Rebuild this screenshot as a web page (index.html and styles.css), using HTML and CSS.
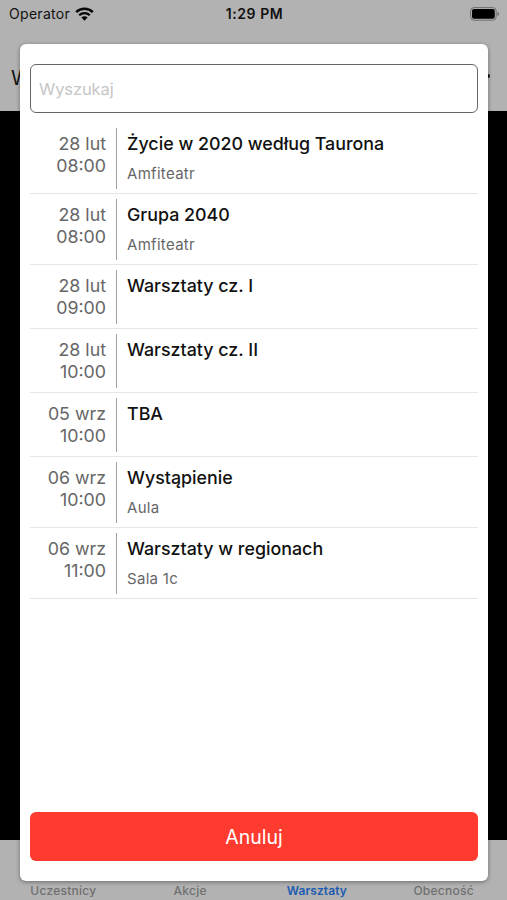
FILE: index.html
```
<!DOCTYPE html>
<html lang="pl">
  <head>
    <meta charset="UTF-8">
    <meta name="viewport" content="width=device-width, initial-scale=1">
    <title>Warsztaty</title>
    <link rel="stylesheet" href="styles.css">
  </head>
  <body>
    <div class="screen">
      <header class="top">
        <div class="status-bar">
          <div class="carrier">
            <span>Operator</span>
            <svg class="wifi" width="19" height="14" viewBox="0 0 19 14">
              <path d="M1.2 5.1a12 12 0 0 1 16.6 0" fill="none" stroke="#080808" stroke-width="2.5"/>
              <path d="M4.2 8.3a7.6 7.6 0 0 1 10.6 0" fill="none" stroke="#080808" stroke-width="2.3"/>
              <path d="M9.5 13.7 6.4 10.5a4.4 4.4 0 0 1 6.2 0z" fill="#080808"/>
            </svg>
          </div>
          <div class="clock">1:29 PM</div>
          <svg class="battery" width="30" height="14" viewBox="0 0 30 14">
            <rect x=".6" y=".6" width="25.6" height="12.6" rx="3.4" fill="none" stroke="#6f6f6f"/>
            <rect x="2" y="2" width="22.8" height="9.8" rx="2" fill="#000"/>
            <path d="M27.5 4.8v4.4c1-.4 1.6-1.2 1.6-2.2s-.6-1.8-1.6-2.2z" fill="#6f6f6f"/>
          </svg>
        </div>
        <div class="nav-bar">
          <span>Warsztaty</span>
          <span class="dot"></span>
        </div>
      </header>
      <nav class="tab-bar">
        <span class="tab">Uczestnicy</span>
        <span class="tab">Akcje</span>
        <span class="tab active">Warsztaty</span>
        <span class="tab">Obecność</span>
      </nav>

      <div class="modal">
        <input class="search" type="text" placeholder="Wyszukaj">
        <ul class="list">
          <li class="item">
            <div class="when">28 lut<br>08:00</div>
            <div class="what"><div class="title">Życie w 2020 według Taurona</div><div class="place">Amfiteatr</div></div>
          </li>
          <li class="item">
            <div class="when">28 lut<br>08:00</div>
            <div class="what"><div class="title">Grupa 2040</div><div class="place">Amfiteatr</div></div>
          </li>
          <li class="item short">
            <div class="when">28 lut<br>09:00</div>
            <div class="what"><div class="title">Warsztaty cz. I</div></div>
          </li>
          <li class="item short">
            <div class="when">28 lut<br>10:00</div>
            <div class="what"><div class="title">Warsztaty cz. II</div></div>
          </li>
          <li class="item short">
            <div class="when">05 wrz<br>10:00</div>
            <div class="what"><div class="title">TBA</div></div>
          </li>
          <li class="item">
            <div class="when">06 wrz<br>10:00</div>
            <div class="what"><div class="title">Wystąpienie</div><div class="place">Aula</div></div>
          </li>
          <li class="item">
            <div class="when">06 wrz<br>11:00</div>
            <div class="what"><div class="title">Warsztaty w regionach</div><div class="place">Sala 1c</div></div>
          </li>
        </ul>
        <button class="cancel" type="button">Anuluj</button>
      </div>
    </div>
  </body>
</html>
```

FILE: styles.css
```
* { box-sizing: border-box; }
html, body { height: 100%; }
body {
  margin: 0;
  background: #000;
  font-family: Inter, "Liberation Sans", sans-serif;
}
.screen {
  position: relative;
  display: flex;
  flex-direction: column;
  justify-content: space-between;
  height: 900px;
  overflow: hidden;
}

/* status and navigation bars */
.top {
  height: 111px;
  background: #b2b2b2;
  color: #111;
}
.status-bar {
  display: grid;
  grid-template-columns: 1fr auto 1fr;
  align-items: center;
  height: 27px;
  padding: 0 7px 0 9px;
  font-size: 14px;
}
.carrier {
  display: flex;
  align-items: center;
  gap: 5px;
  letter-spacing: .3px;
}
.clock {
  font-weight: 600;
  letter-spacing: .55px;
}
.battery { justify-self: end; }
.nav-bar {
  display: flex;
  align-items: center;
  justify-content: space-between;
  height: 102px;
  padding: 0 17px 0 11px;
  font-size: 20px;
}
.dot {
  width: 4px;
  height: 4px;
  margin-bottom: 4px;
  border-radius: 50%;
  background: #111;
}

.tab-bar {
  display: grid;
  grid-template-columns: repeat(4, 1fr);
  align-items: end;
  height: 60px;
  padding-bottom: 1px;
  background: #b2b2b2;
  color: #707070;
  font-size: 12px;
  font-weight: 500;
  letter-spacing: .25px;
  line-height: 16px;
  text-align: center;
}
.tab.active {
  color: #1c5cb0;
  font-weight: 600;
  letter-spacing: .1px;
}

/* dialog */
.modal {
  position: absolute;
  top: 44px;
  left: 20px;
  right: 19px;
  bottom: 19px;
  display: flex;
  flex-direction: column;
  padding: 20px 10px;
  border-radius: 6px;
  background: #fff;
  box-shadow: 0 1px 4px rgba(0, 0, 0, .4);
}
.search {
  flex: none;
  width: 100%;
  height: 49px;
  padding: 0 8px;
  border: 1px solid #666;
  border-radius: 6px;
  font: 16.5px Inter, "Liberation Sans", sans-serif;
  letter-spacing: -.1px;
}
.search::placeholder { color: #c6c6c6; }
.list {
  flex: 1;
  margin: 10px 0 0;
  padding: 0;
  list-style: none;
}
.item {
  display: flex;
  height: 71px;
  padding: 5px 0 4px;
  border-bottom: 1px solid #e6e6e6;
}
.item.short { height: 64px; }
.when {
  width: 87px;
  padding: 5px 10px 0 0;
  border-right: 1px solid #a0a0a0;
  color: #666;
  font-size: 17.8px;
  line-height: 22px;
  text-align: right;
}
.what { padding: 4px 0 0 10px; }
.title {
  color: #111;
  font-size: 17.85px;
  font-weight: 500;
  line-height: 24px;
}
.place {
  margin-top: 8px;
  color: #666;
  font-size: 15px;
  letter-spacing: .3px;
  line-height: 20px;
}
.cancel {
  flex: none;
  height: 49px;
  padding: 1px 0 0;
  border: 0;
  border-radius: 6px;
  background: #ff3b30;
  color: #fff;
  font: 19.5px Inter, "Liberation Sans", sans-serif;
}
```
